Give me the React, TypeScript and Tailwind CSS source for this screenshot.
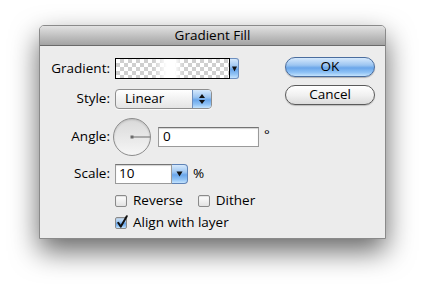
import React from "react";

const aqua =
  "bg-[linear-gradient(to_bottom,#d6e9fc_0%,#9cc5f1_40%,#6aa6ea_55%,#8fc2f5_80%,#c4e3fd_100%)]";

function DownArrow() {
  return (
    <svg width="7" height="6" viewBox="0 0 7 6">
      <path d="M0.5 0.5 H6.5 L3.5 5.5 Z" fill="#111" />
    </svg>
  );
}

function Checkbox({ checked = false }: { checked?: boolean }) {
  return (
    <div
      className={`relative w-[12px] h-[12px] rounded-[2px] border border-[#8a8a8a] shadow-[inset_0_1px_1px_rgba(0,0,0,0.12)] ${
        checked ? aqua + " border-[#5b7fae]" : "bg-gradient-to-b from-[#ffffff] to-[#e2e2e2]"
      }`}
    >
      {checked && (
        <svg
          className="absolute left-[0px] top-[-3px] overflow-visible"
          width="13"
          height="14"
          viewBox="0 0 13 14"
        >
          <path
            d="M2.2 7.8 L4.8 11.6 L10.8 1.2"
            stroke="#111"
            strokeWidth="2"
            fill="none"
            strokeLinecap="round"
            strokeLinejoin="round"
          />
        </svg>
      )}
    </div>
  );
}

function Label({ children }: { children: React.ReactNode }) {
  return <div className="w-[70px] mr-[5px] text-right leading-none">{children}</div>;
}

export default function App() {
  return (
    <div className="w-[425px] h-[294px] bg-white pl-[39px] pt-[25px] font-['Open_Sans',sans-serif] text-[13.5px] text-black">
      {/* window */}
      <div className="w-[347px] h-[214px] flex flex-col border border-[#8a8a8a] rounded-t-[5px] bg-[#ececec] shadow-[0_12px_28px_rgba(0,0,0,0.6)] overflow-hidden">
        {/* title bar */}
        <div className="h-[20px] shrink-0 flex items-center justify-center border-b border-[#6a6a6a] bg-gradient-to-b from-[#e2e2e2] to-[#a3a3a3] leading-none">
          Gradient Fill
        </div>

        {/* body */}
        <div className="flex flex-1">
          <div className="w-[245px] pt-[12px] flex flex-col">
            {/* Gradient */}
            <div className="h-[21px] flex items-center">
              <Label>Gradient:</Label>
              <div className="relative w-[115px] h-[21px] border border-black bg-[repeating-conic-gradient(#cfcfcf_0%_25%,#ffffff_0%_50%)] bg-[length:8px_8px]">
                <div className="absolute inset-0 bg-[linear-gradient(to_right,rgba(255,255,255,0)_33%,#ffffff_45%,#ffffff_52%,rgba(255,255,255,0)_60%)]" />
              </div>
              <div
                className={`w-[9px] h-[21px] flex items-center justify-center rounded-r-[3px] border border-l-0 border-[#6d8fbf] ${aqua}`}
              >
                <svg width="5" height="6" viewBox="0 0 5 6">
                  <path d="M0 0.5 H5 L2.5 5.5 Z" fill="#111" />
                </svg>
              </div>
            </div>

            {/* Style */}
            <div className="mt-[10px] h-[20px] flex items-center">
              <Label>Style:</Label>
              <div className="w-[97px] h-[20px] flex rounded-[4px] border border-[#8e8e8e] overflow-hidden bg-gradient-to-b from-[#ffffff] to-[#e4e4e4] shadow-[0_1px_0_rgba(255,255,255,0.8)]">
                <div className="flex-1 pl-[9px] flex items-center leading-none">Linear</div>
                <div className={`w-[19px] flex flex-col items-center justify-center gap-[2px] border-l border-[#6d8fbf] ${aqua}`}>
                  <svg width="6" height="4" viewBox="0 0 6 4">
                    <path d="M0 4 H6 L3 0 Z" fill="#111" />
                  </svg>
                  <svg width="6" height="4" viewBox="0 0 6 4">
                    <path d="M0 0 H6 L3 4 Z" fill="#111" />
                  </svg>
                </div>
              </div>
            </div>

            {/* Angle */}
            <div className="mt-[9px] h-[37px] flex items-center">
              <Label>Angle:</Label>
              <div className="-ml-[2px] w-[38px] h-[38px] rounded-full border border-[#8d8d8d] bg-gradient-to-b from-[#d9d9d9] to-[#f6f6f6] shadow-[inset_0_1px_2px_rgba(0,0,0,0.15)]">
                <svg width="36" height="36" viewBox="0 0 36 36">
                  <rect x="16.5" y="16.5" width="3" height="3" fill="#6a6a6a" />
                  <line x1="18" y1="18" x2="36" y2="18" stroke="#6a6a6a" strokeWidth="1" />
                </svg>
              </div>
              <div className="ml-[7px] w-[101px] h-[20px] bg-white border border-[#9a9a9a] border-t-[#747474] shadow-[inset_0_1px_1px_rgba(0,0,0,0.18)] pl-[4px] flex items-center leading-none">
                0
              </div>
              <div className="ml-[5px] leading-none -mt-[4px]">°</div>
            </div>

            {/* Scale */}
            <div className="mt-[9px] h-[20px] flex items-center">
              <Label>Scale:</Label>
              <div className="w-[57px] h-[20px] bg-white border border-[#9a9a9a] border-t-[#747474] shadow-[inset_0_1px_1px_rgba(0,0,0,0.18)] pl-[3px] flex items-center leading-none">
                10
              </div>
              <div
                className={`w-[16px] h-[20px] flex items-center justify-center rounded-r-[4px] border border-l-0 border-[#5f83b6] ${aqua}`}
              >
                <DownArrow />
              </div>
              <div className="ml-[5px] leading-none">%</div>
            </div>

            {/* Reverse / Dither */}
            <div className="mt-[9px] h-[16px] flex items-center pl-[75px]">
              <Checkbox />
              <span className="ml-[6px] leading-none">Reverse</span>
              <div className="ml-[15px]">
                <Checkbox />
              </div>
              <span className="ml-[6px] leading-none">Dither</span>
            </div>

            {/* Align with layer */}
            <div className="mt-[6px] h-[16px] flex items-center pl-[75px]">
              <Checkbox checked />
              <span className="ml-[6px] leading-none">Align with layer</span>
            </div>
          </div>

          {/* buttons */}
          <div className="pt-[11px] flex flex-col gap-[8px]">
            <button
              className={`w-[90px] h-[20px] rounded-full border border-[#4a6d9e] ${aqua} shadow-[0_1px_1px_rgba(0,0,0,0.25)] leading-none flex items-center justify-center`}
            >
              OK
            </button>
            <button className="w-[90px] h-[20px] rounded-full border border-[#5a5a5a] bg-gradient-to-b from-[#ffffff] via-[#f1f1f1] to-[#dcdcdc] shadow-[0_1px_1px_rgba(0,0,0,0.2)] leading-none flex items-center justify-center">
              Cancel
            </button>
          </div>
        </div>
      </div>
    </div>
  );
}
